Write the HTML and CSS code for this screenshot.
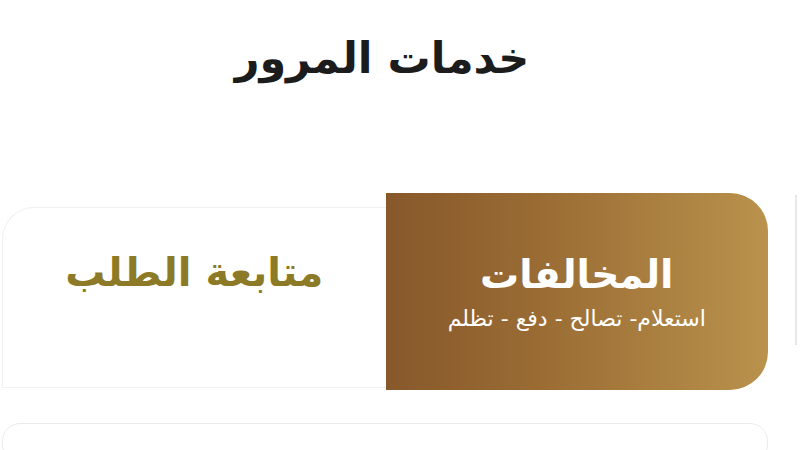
FILE: index.html
```html
<!DOCTYPE html>
<html lang="ar" dir="rtl">
<head>
<meta charset="utf-8">
<link rel="stylesheet" href="styles.css">
</head>
<body>
<div class="page">
  <h1 class="title">خدمات المرور</h1>
  <div class="tabs">
    <div class="tab tab-active">
      <div class="tab-title">المخالفات</div>
      <div class="tab-sub">استعلام- تصالح - دفع - تظلم</div>
    </div>
    <div class="tab tab-plain">
      <div class="tab-title-gold">متابعة الطلب</div>
    </div>
  </div>
  <div class="next-card"></div>
  <div class="side-peek"></div>
</div>
</body>
</html>
```

FILE: styles.css
```css
* { box-sizing: border-box; }
html, body { margin: 0; padding: 0; background: #ffffff; }
body {
  width: 800px;
  height: 450px;
  overflow: hidden;
  font-family: "DejaVu Sans", "Noto Sans Arabic", sans-serif;
}
.page {
  position: relative;
  height: 450px;
  overflow: hidden;
  padding: 28px 32px 0 2px;
}
.title {
  margin: 0;
  height: 60px;
  text-align: center;
  font-size: 43px;
  font-weight: bold;
  color: #1c1c1c;
  line-height: 60px;
  padding-right: 6px;
}
.tabs {
  margin-top: 105px;
  display: flex;
  height: 197px;
}
.tab {
  flex: 1 1 0;
  min-width: 0;
  display: flex;
  flex-direction: column;
  align-items: center;
  justify-content: center;
}
.tab-active {
  background: linear-gradient(90deg, #87582a 0%, #9a6c34 40%, #b9924c 100%);
  border-top-right-radius: 38px;
  border-bottom-right-radius: 38px;
  color: #ffffff;
}
.tab-title {
  font-size: 39px;
  font-weight: bold;
  line-height: 46px;
}
.tab-sub {
  font-size: 22px;
  line-height: 26px;
  margin-top: 8px;
}
.tab-plain {
  margin-top: 14px;
  height: 181px;
  border: 1px solid #f0f0f0;
  border-right: none;
  border-top-left-radius: 32px;
  padding-bottom: 52px;
}
.tab-title-gold {
  font-size: 40px;
  font-weight: bold;
  color: #8c7a26;
  line-height: 46px;
}
.next-card {
  margin-top: 33px;
  height: 40px;
  border: 1px solid #ebebeb;
  border-radius: 18px;
}
.side-peek {
  position: absolute;
  right: 3px;
  top: 195px;
  width: 2px;
  height: 150px;
  background: #e8e8e8;
}
```
